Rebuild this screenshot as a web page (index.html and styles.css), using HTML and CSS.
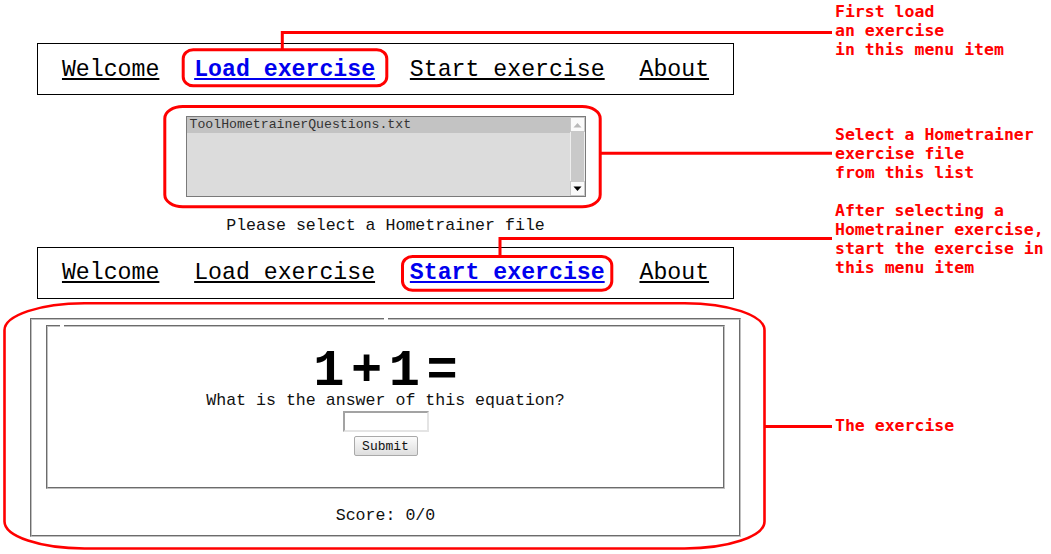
FILE: index.html
```html
<!DOCTYPE html>
<html lang="en">
<head>
<meta charset="utf-8">
<title>Hometrainer</title>
<link rel="stylesheet" href="styles.css">
</head>
<body>
<div class="app">
  <nav class="menu">
    <a href="#" class="menu-link">Welcome</a>
    <a href="#" class="menu-link active">Load exercise</a>
    <a href="#" class="menu-link">Start exercise</a>
    <a href="#" class="menu-link">About</a>
  </nav>

  <div class="listbox">
    <div class="options">
      <div class="option selected">ToolHometrainerQuestions.txt</div>
    </div>
    <div class="scrollbar">
      <div class="sb-btn">
        <svg width="9" height="6" viewBox="0 0 9 6"><path d="M0.5 5.5 L4.5 1 L8.5 5.5 Z" fill="#b8b8b8"/></svg>
      </div>
      <div class="sb-track"></div>
      <div class="sb-btn">
        <svg width="9" height="6" viewBox="0 0 9 6"><path d="M0.5 0.5 L4.5 5 L8.5 0.5 Z" fill="#000"/></svg>
      </div>
    </div>
  </div>
  <p class="hint">Please select a Hometrainer file</p>

  <nav class="menu menu-second">
    <a href="#" class="menu-link">Welcome</a>
    <a href="#" class="menu-link">Load exercise</a>
    <a href="#" class="menu-link active">Start exercise</a>
    <a href="#" class="menu-link">About</a>
  </nav>

  <fieldset class="stage">
    <legend class="stage-legend"></legend>
    <fieldset class="card">
      <legend class="card-legend"></legend>
      <div class="equation">1+1=</div>
      <div class="question">What is the answer of this equation?</div>
      <input class="answer" type="text">
      <button class="submit" type="button">Submit</button>
    </fieldset>
    <div class="score">Score: 0/0</div>
  </fieldset>
</div>

<div class="notes">
  <div class="note note-1">First load<br>an exercise<br>in this menu item</div>
  <div class="note note-2">Select a Hometrainer<br>exercise file<br>from this list</div>
  <div class="note note-3">After selecting a<br>Hometrainer exercise,<br>start the exercise in<br>this menu item</div>
  <div class="note note-4">The exercise</div>
</div>

<svg class="marks" width="1051" height="554" viewBox="0 0 1051 554">
  <g fill="none" stroke="#ff0000" stroke-width="3">
    <rect x="183.2" y="49.8" width="203.6" height="36" rx="10" ry="9"/>
    <path d="M282.3 49.8 V32.5 H832"/>
    <rect x="164.8" y="106.5" width="435.4" height="100.3" rx="18" ry="12"/>
    <path d="M600.2 153.3 H832"/>
    <rect x="402.5" y="256.5" width="209.3" height="33.7" rx="10" ry="9"/>
    <path d="M500 256.5 V238.5 H832"/>
    <rect x="4.5" y="303.2" width="760" height="245.3" rx="80" ry="27" stroke-width="2.6"/>
    <path d="M765 426.5 H832"/>
  </g>
</svg>
</body>
</html>
```

FILE: styles.css
```css
html, body {
  margin: 0;
  padding: 0;
  background: #ffffff;
}

body {
  position: relative;
  width: 1051px;
  height: 554px;
  overflow: hidden;
  display: flex;
  font-family: "Liberation Mono", "DejaVu Sans Mono", monospace;
  color: #000;
}

.app {
  width: 771px;
  display: flex;
  flex-direction: column;
  align-items: center;
}

/* menu */
.menu {
  margin-top: 43px;
  height: 52px;
  box-sizing: border-box;
  border: 1px solid #000;
  padding: 1px 24px 0;
  display: flex;
  align-items: center;
  gap: 34.8px;
}

.menu-second {
  margin-top: 11.7px;
}

.menu-link {
  font-size: 23.2px;
  line-height: 26px;
  color: #000;
  text-decoration: underline;
  white-space: nowrap;
}

.menu-link.active {
  color: #0000ee;
  font-weight: bold;
}

/* list box */
.listbox {
  margin-top: 21px;
  width: 400px;
  height: 81px;
  box-sizing: border-box;
  border: 1px solid #7a7a7a;
  background: #dcdcdc;
  display: flex;
}

.options {
  flex: 1;
}

.option {
  height: 16px;
  line-height: 16px;
  padding-left: 3px;
  font-size: 13.2px;
  color: #333;
}

.option.selected {
  background: #c3c3c3;
}

.scrollbar {
  width: 15px;
  display: flex;
  flex-direction: column;
}

.sb-btn {
  height: 15px;
  box-sizing: border-box;
  border: 1px solid #c8c8c8;
  background: #fafafa;
  display: flex;
  align-items: center;
  justify-content: center;
}

.sb-track {
  flex: 1;
  background: #c9c9c9;
  border-left: 1px solid #eeeeee;
  border-right: 1px solid #eeeeee;
}

.hint {
  margin: 19px 0 0;
  font-size: 16.6px;
  line-height: 19px;
  color: #111;
}

/* exercise */
.stage {
  width: 711px;
  box-sizing: border-box;
  margin: 19px 0 0;
  padding: 5.3px 14px 10px;
  border: 2px groove #c0c0c0;
  min-inline-size: 0;
}

.stage-legend {
  margin: 0 auto;
  padding: 0 2px;
}

.card {
  margin: 0;
  padding: 25.8px 12px 30.3px;
  border: 2px groove #c0c0c0;
  min-inline-size: 0;
  display: flex;
  flex-direction: column;
  align-items: center;
}

.card-legend {
  padding: 0 2px;
}

.equation {
  font-size: 52px;
  line-height: 38px;
  font-weight: bold;
  letter-spacing: 6.5px;
  padding-left: 6.5px;
}

.question {
  font-size: 16.6px;
  line-height: 19px;
  color: #111;
}

.answer {
  margin: 1.6px 0 0;
  width: 86px;
  height: 21px;
  box-sizing: border-box;
  padding: 0;
  border: 2px solid;
  border-color: #a3a3a3 #e4e4e4 #e4e4e4 #a3a3a3;
  background: #fff;
}

.submit {
  margin-top: 4px;
  width: 64px;
  height: 20px;
  box-sizing: border-box;
  padding: 0;
  border: 1px solid #a9a9a9;
  border-radius: 2px;
  background: linear-gradient(#fbfbfb, #dedede);
  font-family: "Liberation Mono", monospace;
  font-size: 13px;
  color: #111;
}

.score {
  margin-top: 17.8px;
  font-size: 16.6px;
  line-height: 19px;
  text-align: center;
  color: #111;
}

/* annotations */
.notes {
  padding-left: 64px;
  display: flex;
  flex-direction: column;
}

.note {
  font-family: "DejaVu Sans Mono", monospace;
  font-weight: bold;
  font-size: 16.5px;
  line-height: 19px;
  color: #ff0000;
  white-space: nowrap;
}

.note-1 { margin-top: 2px; }
.note-2 { margin-top: 66px; }
.note-3 { margin-top: 18.8px; }
.note-4 { margin-top: 139px; }

.marks {
  position: absolute;
  top: 0;
  left: 0;
  pointer-events: none;
}
```
